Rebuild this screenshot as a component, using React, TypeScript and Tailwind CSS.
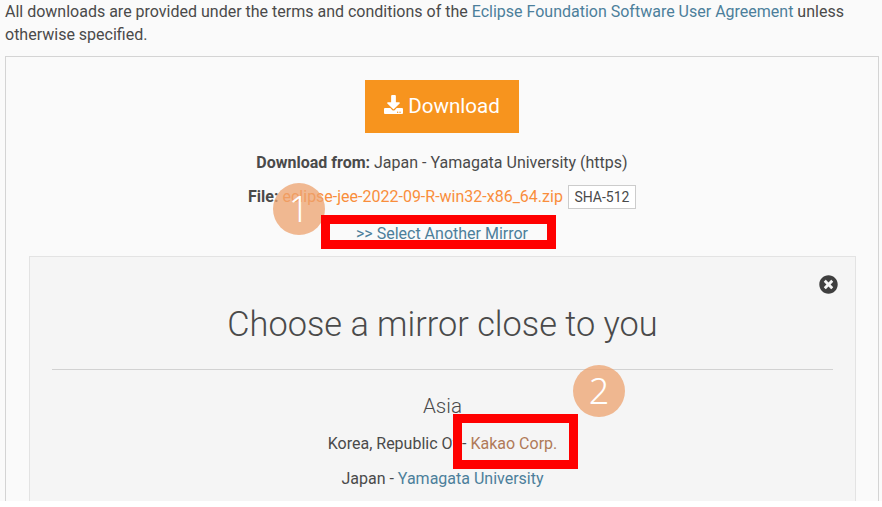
import { FaDownload, FaTimesCircle } from "react-icons/fa";

function Marker({ n, className }: { n: string; className: string }) {
  return (
    <div
      className={`absolute flex h-[52px] w-[52px] items-center justify-center rounded-full bg-[#eca26d]/75 font-['Noto_Sans',sans-serif] text-[36px] font-light leading-none text-white ${className}`}
    >
      {n}
    </div>
  );
}

export default function App() {
  return (
    <div className="relative h-[507px] overflow-hidden bg-white font-['Roboto',sans-serif] text-[16px] leading-[23px] text-[#4a4a4a]">
      <div className="h-[501px] overflow-hidden bg-[#fafafa] px-[5px]">
        <p className="mb-[10px]">
          All downloads are provided under the terms and conditions of the{" "}
          <a className="text-[#4c7f9b]">Eclipse Foundation Software User Agreement</a> unless otherwise specified.
        </p>

        <div className="w-[874px] border-[1px] border-[#d4d4d4] px-[23px] pt-[23px] text-center">
          <a className="mx-auto flex h-[53px] w-[154px] items-center justify-center gap-[5px] bg-[#f7941e] text-[20.6px] text-white">
            <FaDownload className="mb-[4px] h-[19px] w-[19px]" />
            Download
          </a>

          <p className="mt-[18px]">
            <strong className="font-bold">Download from:</strong> Japan - Yamagata University (https)
          </p>

          <p className="mt-[10px] flex h-[25px] items-center justify-center">
            <strong className="mr-[4px] font-bold">File:</strong>
            <a className="text-[#f98e3c]">eclipse-jee-2022-09-R-win32-x86_64.zip</a>
            <span className="ml-[5px] border border-[#ccc] bg-white px-[5.5px] text-[14px] leading-[22px]">SHA-512</span>
          </p>

          <p className="mt-[13px]">
            <a className="text-[#4c7f9b]">&gt;&gt; Select Another Mirror</a>
          </p>

          <div className="relative -mr-px mt-[11px] h-[300px] border border-[#e3e3e3] bg-[#f5f5f5] px-[22px]">
            <FaTimesCircle className="absolute right-[17px] top-[18px] h-[19px] w-[19px] text-[#3f3f3f]" />
            <h2 className="pt-[45px] text-[34.3px] font-light leading-[44px]">Choose a mirror close to you</h2>
            <hr className="mt-[23px] border-[#d2d2d2]" />
            <h3 className="mt-[24px] text-[20.6px] font-light leading-[24px]">Asia</h3>
            <p className="mt-[14px]">
              Korea, Republic Of - <a className="text-[#b07a58]">Kakao Corp.</a>
            </p>
            <p className="mt-[12px]">
              Japan - <a className="text-[#4c7f9b]">Yamagata University</a>
            </p>
          </div>
        </div>
      </div>

      <Marker n="1" className="left-[273px] top-[183px]" />
      <Marker n="2" className="left-[573px] top-[365px]" />
      <div className="absolute left-[321px] top-[215px] h-[34px] w-[235px] border-[9px] border-[#ff0000]" />
      <div className="absolute left-[453px] top-[414px] h-[55px] w-[125px] border-[9px] border-[#ff0000]" />
    </div>
  );
}
